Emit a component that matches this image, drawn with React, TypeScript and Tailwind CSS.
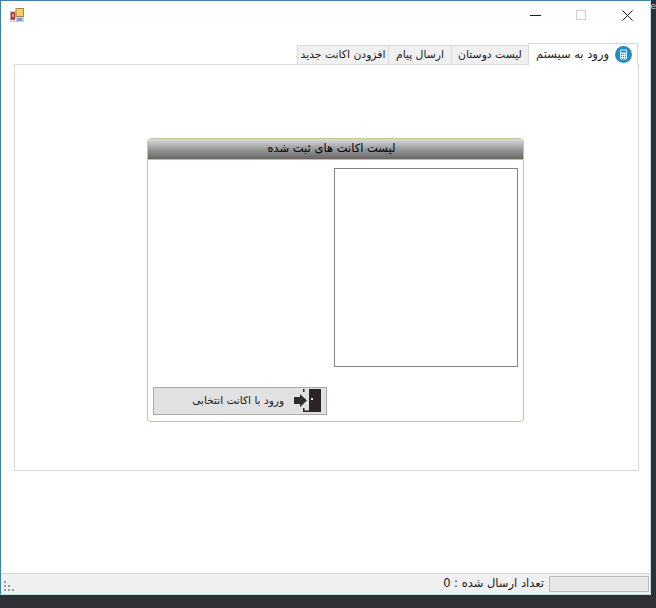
import { useState } from 'react';

const TABS = [
  { id: 'login', label: 'ورود به سیستم', width: 'w-[110px]' },
  { id: 'friends', label: 'لیست دوستان', width: 'w-[78px]' },
  { id: 'send', label: 'ارسال پیام', width: 'w-[64px]' },
  { id: 'add', label: 'افزودن اکانت جدید', width: 'w-[92px]' },
];

function AppIcon() {
  return (
    <svg width="14" height="14" viewBox="0 0 14 14">
      <rect x="0.5" y="3.5" width="13" height="10" fill="#fff" stroke="#c9c9ce" />
      <path d="M0 8.500h5M4.500 4v9.500" stroke="#d4d4d8" />
      <rect x="1" y="4.500" width="4" height="7" fill="#b03a3a" stroke="#8a2a2a" strokeWidth="0.5" />
      <rect x="2.200" y="6" width="1.600" height="3" fill="#e8c0b0" />
      <rect x="6" y="0.500" width="7.500" height="8" fill="#f5cf62" stroke="#a08a50" />
      <rect x="6.500" y="9.500" width="6" height="3.500" fill="#7e9fcb" />
    </svg>
  );
}

function CalcIcon() {
  return (
    <svg width="17" height="17" viewBox="0 0 17 17">
      <circle cx="8.500" cy="8.500" r="8.500" fill="#1f8fc4" />
      <rect x="5" y="3.500" width="7" height="10" rx="1" fill="#d8eef8" />
      <rect x="6" y="4.500" width="5" height="2" fill="#1f8fc4" />
      <path d="M6 8h1v1H6zM8 8h1v1H8zM10 8h1v1h-1zM6 10h1v1H6zM8 10h1v1H8zM10 10h1v1h-1zM6 12h1v.8H6zM8 12h1v.8H8zM10 12h1v.8h-1z" fill="#1f8fc4" />
    </svg>
  );
}

function DoorIcon() {
  return (
    <svg width="28" height="24" viewBox="0 0 28 24">
      {/* door leaf */}
      <rect x="15" y="0" width="12" height="23" fill="#2a2422" />
      <rect x="17" y="9" width="2" height="2" fill="#e8e8e8" />
      {/* frame stubs, open on the arrow side */}
      <path d="M9 0h1.500v3H9zM9 19h1.500v2.500H15V23H9z" fill="#2a2422" />
      {/* arrow */}
      <path d="M0 8h6V5l7 6.500L6 18v-3H0z" fill="#2f2f2f" />
    </svg>
  );
}

export default function App() {
  const [active, setActive] = useState('login');

  return (
    <div className="relative w-[656px] h-[608px] overflow-hidden bg-[#2e3036] font-['DejaVu_Sans',sans-serif]">
      <span className="absolute right-0 top-0 text-[9px] leading-[12px] text-[#c8c8c8]">e</span>

      {/* Window */}
      <div className="w-[651px] h-[595px] flex flex-col bg-white border-t border-l border-r border-b border-t-[#3f7f9f] border-l-[#3f7f9f] border-r-[#bfe0ec] border-b-[#bfe0ec]">
        {/* Title bar */}
        <div className="h-[30px] flex items-start justify-between shrink-0">
          <div className="pl-[9px] pt-[7px]">
            <AppIcon />
          </div>
          <div className="flex">
            <div className="w-[46px] h-[28px] flex items-center justify-center">
              <div className="w-[11px] h-px bg-[#1a1a1a]" />
            </div>
            <div className="w-[46px] h-[28px] flex items-center justify-center">
              <div className="w-[10px] h-[10px] border border-[#cfcfcf]" />
            </div>
            <div className="w-[46px] h-[28px] flex items-center justify-center">
              <svg width="11" height="11" viewBox="0 0 11 11">
                <path d="M0.500 0.500l10 10M10.500 0.500l-10 10" stroke="#1a1a1a" strokeWidth="1" />
              </svg>
            </div>
          </div>
        </div>

        {/* Tabs */}
        <div className="flex-1 pt-[12px] pl-[13px] pr-[11px] min-h-0">
          <div className="flex flex-row-reverse items-end h-[21px] pr-px relative z-10">
            {TABS.map((tab) => {
              const isActive = tab.id === active;
              return (
                <button
                  key={tab.id}
                  onClick={() => setActive(tab.id)}
                  className={`${tab.width} flex items-center border border-b-0 border-[#d9d9d9] text-[#1a1a1a] -ml-px ${
                    isActive
                      ? 'h-[22px] flex-row-reverse justify-start gap-[6px] pr-[5px] bg-white z-10 -mb-px text-[11.500px]'
                      : 'h-[19px] justify-center bg-[#f0f0f0] text-[10.800px]'
                  }`}
                >
                  {isActive && <CalcIcon />}
                  <span dir="rtl" className="whitespace-nowrap">{tab.label}</span>
                </button>
              );
            })}
          </div>

          <div className="h-[407px] border border-[#d9d9d9] pt-[73px] pl-[132px]">
            {/* Group panel */}
            <div className="w-[377px] h-[284px] flex flex-col border border-[#cfc09a] rounded-[4px] overflow-hidden bg-white">
              <div className="h-[21px] shrink-0 flex items-center justify-center pr-[8px] border-b border-[#c9bc98] bg-gradient-to-b from-[#dcdcdc] via-[#9a9a9a] to-[#666666] text-[11.500px] text-black">
                <span dir="rtl">لیست اکانت های ثبت شده</span>
              </div>
              <div className="flex-1 flex flex-col justify-between pt-[8px] pb-[6px] px-[5px]">
                <div className="self-end w-[184px] h-[199px] border border-[#848484] bg-white" />
                <button className="w-[174px] h-[28px] flex items-center justify-end pr-[4px] gap-[10px] border border-[#a9a9a9] bg-[#e1e1e1] text-[10.600px] text-[#1a1a1a]">
                  <span dir="rtl" className="whitespace-nowrap">ورود با اکانت انتخابی</span>
                  <DoorIcon />
                </button>
              </div>
            </div>
          </div>
        </div>

        {/* Status bar */}
        <div className="h-[21px] shrink-0 flex items-center justify-between bg-[#f0f0f0] border-t border-[#d7d7d7]">
          <div className="pl-[3px] pt-[4px]">
            <svg width="11" height="11" viewBox="0 0 11 11" fill="#9a9a9a">
              <path d="M0 0h2v2H0zM0 4h2v2H0zM4 4h2v2H4zM0 8h2v2H0zM4 8h2v2H4zM8 8h2v2H8z" />
            </svg>
          </div>
          <div className="flex items-center gap-[5px] pr-px">
            <span dir="rtl" className="text-[11.500px] text-[#1a1a1a] whitespace-nowrap">تعداد ارسال شده :  0</span>
            <div className="w-[100px] h-[16px] border border-[#bcbcbc] bg-[#e6e6e6]" />
          </div>
        </div>
      </div>
    </div>
  );
}
